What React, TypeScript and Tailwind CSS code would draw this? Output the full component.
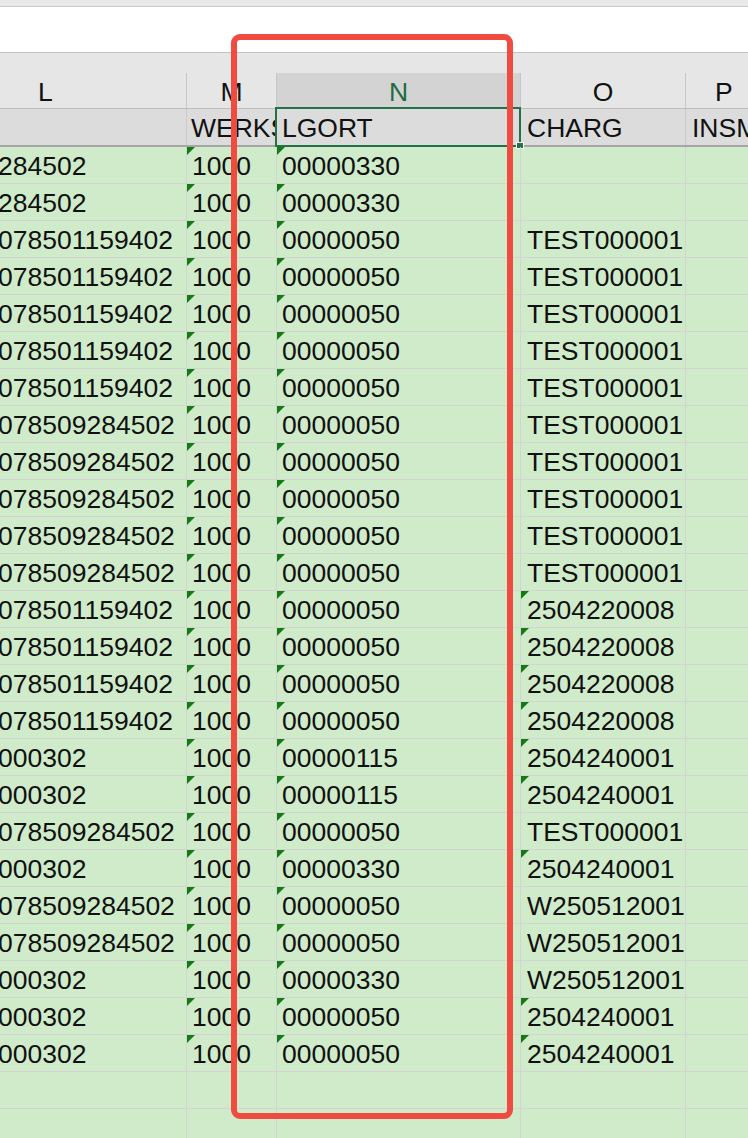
import React from 'react'

type Row = { l: string; n: string; o: string }

// data rows as they show in the sheet (L is cut by the viewport)
const rows: Row[] = [
  { l: '284502', n: '00000330', o: '' },
  { l: '284502', n: '00000330', o: '' },
  { l: '078501159402', n: '00000050', o: 'TEST000001' },
  { l: '078501159402', n: '00000050', o: 'TEST000001' },
  { l: '078501159402', n: '00000050', o: 'TEST000001' },
  { l: '078501159402', n: '00000050', o: 'TEST000001' },
  { l: '078501159402', n: '00000050', o: 'TEST000001' },
  { l: '078509284502', n: '00000050', o: 'TEST000001' },
  { l: '078509284502', n: '00000050', o: 'TEST000001' },
  { l: '078509284502', n: '00000050', o: 'TEST000001' },
  { l: '078509284502', n: '00000050', o: 'TEST000001' },
  { l: '078509284502', n: '00000050', o: 'TEST000001' },
  { l: '078501159402', n: '00000050', o: '2504220008' },
  { l: '078501159402', n: '00000050', o: '2504220008' },
  { l: '078501159402', n: '00000050', o: '2504220008' },
  { l: '078501159402', n: '00000050', o: '2504220008' },
  { l: '000302', n: '00000115', o: '2504240001' },
  { l: '000302', n: '00000115', o: '2504240001' },
  { l: '078509284502', n: '00000050', o: 'TEST000001' },
  { l: '000302', n: '00000330', o: '2504240001' },
  { l: '078509284502', n: '00000050', o: 'W250512001' },
  { l: '078509284502', n: '00000050', o: 'W250512001' },
  { l: '000302', n: '00000330', o: 'W250512001' },
  { l: '000302', n: '00000050', o: '2504240001' },
  { l: '000302', n: '00000050', o: '2504240001' },
]

const cols = 'grid grid-cols-[187px_90px_244px_165px_1fr]'

// little green "number stored as text" marker
function Flag() {
  return (
    <span className="absolute left-0 top-0 h-0 w-0 border-t-[8px] border-r-[8px] border-t-[#127c12] border-r-transparent" />
  )
}

function Cell({ text, flag, className = '' }: { text?: string; flag?: boolean; className?: string }) {
  return (
    <div className={`relative flex items-center overflow-hidden whitespace-nowrap border-r border-b border-[#d3d3d3] pl-[5px] pt-[3px] ${className}`}>
      {flag && <Flag />}
      {text}
    </div>
  )
}

export default function App() {
  return (
    <div
      className="relative h-[1138px] w-[748px] overflow-hidden bg-[#cfebca] text-[26.5px] leading-none text-[#111]"
      style={{ fontFamily: '"Liberation Sans", Arial, sans-serif' }}
    >
      {/* toolbar strip + formula bar */}
      <div className="h-[7px] border-b border-[#c8c8c8] bg-[#e8e8e8]" />
      <div className="h-[46px] border-b border-[#c2c2c2] bg-white" />
      <div className="h-[20px] bg-[#e6e6e6]" />

      {/* column letters */}
      <div className={`${cols} h-[36px] border-b border-[#bdbdbd] bg-[#e6e6e6]`}>
        <div className="flex items-center justify-start border-r border-[#c6c6c6] pl-[38px] pt-[4px]">L</div>
        <div className="flex items-center justify-center border-r border-[#c6c6c6] pt-[4px]">M</div>
        <div className="flex items-center justify-center border-r border-[#c6c6c6] bg-[#d3d3d3] pt-[4px] text-[#1e6b40]">N</div>
        <div className="flex items-center justify-center border-r border-[#c6c6c6] pt-[4px]">O</div>
        <div className="flex items-center justify-start pl-[29px] pt-[4px]">P</div>
      </div>

      {/* header row */}
      <div className={`${cols} h-[38px] border-b-2 border-[#a6a6a6] bg-[#dcdcdc]`}>
        <div className="border-r border-[#cbcbcb]" />
        <div className="flex items-center overflow-hidden whitespace-nowrap border-r border-[#cbcbcb] pl-[4px] pt-[3px]">WERKS</div>
        <div className="relative flex items-center border-r border-[#cbcbcb] pl-[5px] pt-[3px]">
          LGORT
          <div className="absolute -top-[2px] -left-[2px] -right-[1px] -bottom-[2px] border-2 border-[#217346]" />
          <div className="absolute -right-[4px] -bottom-[4px] h-[7px] w-[8px] border border-white bg-[#217346]" />
        </div>
        <div className="flex items-center border-r border-[#cbcbcb] pl-[6px] pt-[3px]">CHARG</div>
        <div className="flex items-center overflow-hidden whitespace-nowrap pl-[6px] pt-[3px]">INSMK</div>
      </div>

      {/* data */}
      {rows.map((r, i) => (
        <div key={i} className={`${cols} h-[37px]`}>
          <div className="flex items-center overflow-hidden whitespace-nowrap border-r border-b border-[#d3d3d3] pt-[3px]">
            <span className="-ml-[2px]">{r.l}</span>
          </div>
          <Cell text="1000" flag className="pl-[4px]" />
          <Cell text={r.n} flag />
          <Cell text={r.o} flag={/^\d+$/.test(r.o)} className="pl-[6px]" />
          <div className="border-b border-[#d3d3d3]" />
        </div>
      ))}
      {[0, 1].map((k) => (
        <div key={k} className={`${cols} h-[37px]`}>
          <Cell />
          <Cell />
          <Cell />
          <Cell />
          <div className="border-b border-[#d3d3d3]" />
        </div>
      ))}

      {/* red highlight box */}
      <div className="absolute left-[231px] top-[34px] h-[1085px] w-[282px] rounded-[9px] border-[6px] border-[#f04b40]" />
    </div>
  )
}
